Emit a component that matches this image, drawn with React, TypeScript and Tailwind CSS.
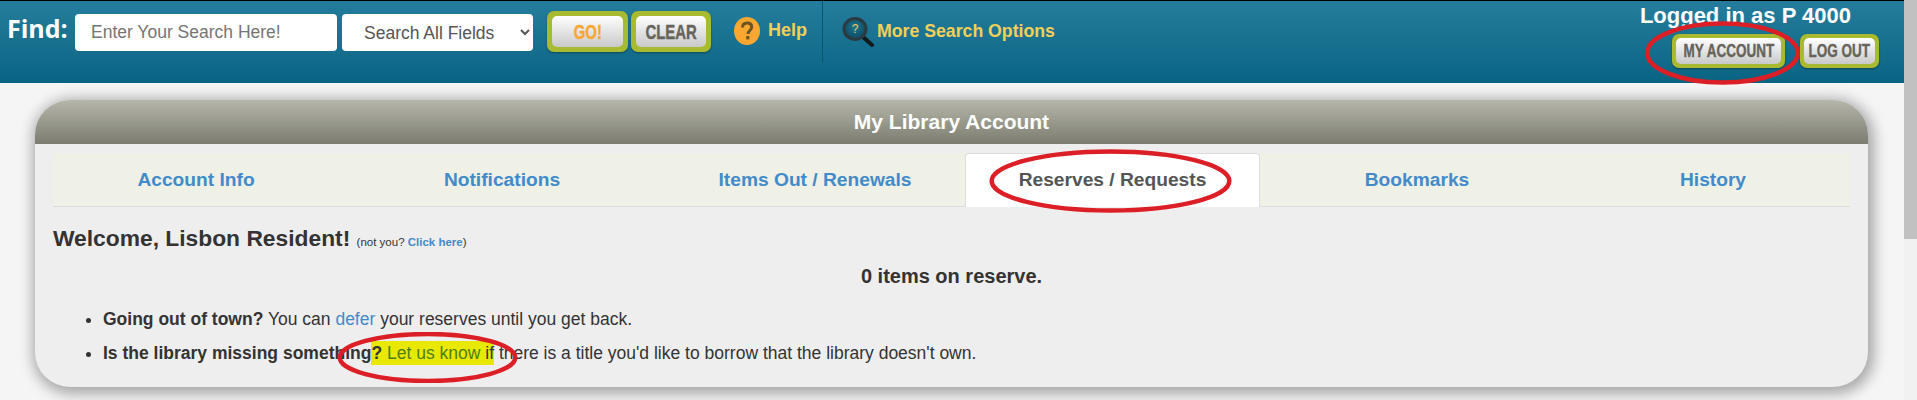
const SANS = "font-['Liberation_Sans',Arial,sans-serif]";

const tabs = [
  { label: "Account Info" },
  { label: "Notifications" },
  { label: "Items Out / Renewals" },
  { label: "Reserves / Requests", active: true },
  { label: "Bookmarks" },
  { label: "History" },
];

function GreenButton({ label, size = "lg", color = "text-[#66645a]" }: { label: string; size?: "lg" | "sm"; color?: string }) {
  const outer = size === "lg" ? "h-[41px] p-[5px]" : "h-[34px] p-[4px]";
  return (
    <div className={`rounded-[7px] bg-[#a8ba30] shadow-[0_1px_2px_rgba(0,0,0,0.35)] ${outer}`}>
      <div className="flex h-full items-center justify-center rounded-[5px] bg-gradient-to-b from-white to-[#c9c9c9]">
        <span className={`inline-block scale-x-[0.71] font-bold whitespace-nowrap [-webkit-text-stroke:0.4px_currentColor] ${color} ${size === "lg" ? "text-[21px]" : "text-[19px]"}`}>
          {label}
        </span>
      </div>
    </div>
  );
}

function HelpIcon() {
  return (
    <svg width="26" height="28" viewBox="0 0 26 28" className="shrink-0">
      <ellipse cx="13" cy="14" rx="13" ry="14" fill="#f9a730" />
      <path d="M8.500 10.500c0-3 2-4.500 4.700-4.500 2.800 0 4.500 1.600 4.500 4 0 3.500-3.700 3.500-3.700 7" fill="none" stroke="#6b5522" strokeWidth="3" />
      <rect x="12.200" y="19" width="3.200" height="3.400" fill="#6b5522" />
    </svg>
  );
}

function SearchIcon() {
  return (
    <svg width="34" height="30" viewBox="0 0 34 30" className="shrink-0">
      <defs>
        <radialGradient id="lens" cx="50%" cy="40%" r="60%">
          <stop offset="0%" stopColor="#1d7391" />
          <stop offset="100%" stopColor="#0c4a60" />
        </radialGradient>
      </defs>
      <line x1="21" y1="19" x2="31" y2="28" stroke="#14191c" strokeWidth="4" strokeLinecap="round" />
      <ellipse cx="14" cy="12" rx="11" ry="10.500" fill="url(#lens)" stroke="#2c3a42" strokeWidth="3" />
      <text x="14" y="16" textAnchor="middle" fontSize="12" fontFamily="Liberation Sans" fill="#e6cf5a">?</text>
    </svg>
  );
}

function Ring({ className }: { className: string }) {
  return (
    <svg className={`pointer-events-none absolute ${className}`} viewBox="0 0 200 100" preserveAspectRatio="none">
      <ellipse cx="100" cy="50" rx="97" ry="46" fill="none" stroke="#dc1f26" strokeWidth="4.500" vectorEffect="non-scaling-stroke" />
    </svg>
  );
}

export default function App() {
  return (
    <div className={`relative flex h-[400px] overflow-hidden bg-[#f5f5f5] ${SANS}`}>
      <div className="min-w-0 flex-1">
        <header className="flex h-[83px] border-t border-black bg-gradient-to-b from-[#247d9c] to-[#086483]">
          <span className="mt-[13px] ml-[7px] w-[62px] font-['Open_Sans',sans-serif] text-[25px] leading-[28px] font-bold text-white">Find:</span>
          <input
            placeholder="Enter Your Search Here!"
            className="mt-[13px] ml-[6px] h-[37px] w-[262px] rounded-[4px] bg-white px-4 text-[17.500px] text-[#555] outline-none placeholder:text-[#757575]"
          />
          <select className="mt-[13px] ml-[5px] h-[37px] w-[191px] rounded-[4px] bg-white pl-[18px] text-[17.500px] text-[#555] outline-none">
            <option>Search All Fields</option>
          </select>
          <div className="mt-[10px] ml-[14px] w-[81px]">
            <GreenButton label="GO!" color="text-[#f9a730]" />
          </div>
          <div className="mt-[10px] ml-[3px] w-[80px]">
            <GreenButton label="CLEAR" />
          </div>
          <div className="mt-[16px] ml-[23px] flex h-[28px] items-center gap-2">
            <HelpIcon />
            <span className="pb-[2px] text-[18px] font-bold text-[#f2cf55]">Help</span>
          </div>
          <div className="ml-[15px] h-[61px] w-px bg-[#0b5470]" />
          <div className="mt-[16px] ml-[18px] flex h-[30px] items-center gap-[2px]">
            <SearchIcon />
            <span className="pb-[2px] text-[17.700px] font-bold text-[#f2cf55]">More Search Options</span>
          </div>
          <div className="ml-auto flex flex-col items-end pr-[25px]">
            <span className="mt-px mr-[28px] text-[22px] leading-[27px] font-bold text-white">Logged in as P 4000</span>
            <div className="mt-[5px] flex gap-[15px]">
              <div className="w-[113px]">
                <GreenButton label="MY ACCOUNT" size="sm" />
              </div>
              <div className="w-[79px]">
                <GreenButton label="LOG OUT" size="sm" />
              </div>
            </div>
          </div>
        </header>

        <main className="px-[35px] pt-[17px]">
          <section className="h-[287px] w-[1833px] overflow-hidden rounded-[35px] bg-[#eeeeee] shadow-[2px_3px_14px_4px_rgba(0,0,0,0.32)]">
            <h2 className="flex h-[44px] items-center justify-center bg-gradient-to-b from-[#b6b7aa] to-[#7c7c71] text-[21px] font-bold text-white">
              My Library Account
            </h2>
            <div className="px-[18px] pt-[9px]">
              <nav className="grid h-[54px] grid-cols-[286px_326px_300px_295px_314px_278px] border-b border-[#dddddd] bg-[#eff0e6]">
                {tabs.map((tab) => (
                  <a
                    key={tab.label}
                    className={
                      tab.active
                        ? "flex h-[54px] items-center justify-center rounded-t-[4px] border border-b-0 border-[#dddddd] bg-white text-[19.200px] font-bold text-[#555]"
                        : "flex items-center justify-center text-[19.200px] font-bold text-[#428bca]"
                    }
                  >
                    {tab.label}
                  </a>
                ))}
              </nav>
              <p className="mt-[17px] text-[22.800px] leading-[28px] font-bold text-[#333]">
                Welcome, Lisbon Resident!{" "}
                <span className="text-[11.500px] font-normal">
                  (not you? <a className="font-bold text-[#428bca]">Click here</a>)
                </span>
              </p>
              <p className="mt-[8px] text-center text-[20px] leading-[24px] font-bold text-[#333]">0 items on reserve.</p>
              <ul className="mt-[14px] ml-[32px] list-disc pl-[18px] text-[17.500px] leading-[34px] text-[#333]">
                <li>
                  <b>Going out of town?</b> You can <a className="text-[#428bca]">defer</a> your reserves until you get back.
                </li>
                <li>
                  <b>Is the library missing something</b>
                  <span className="bg-[#e8e800] py-[2px]">
                    <b>?</b> <a className="text-[#4e7f12]">Let us know</a> if
                  </span>{" "}
                  there is a title you'd like to borrow that the library doesn't own.
                </li>
              </ul>
            </div>
          </section>
        </main>
      </div>

      <aside className="w-[13px] shrink-0 bg-[#f1f1f1]">
        <div className="h-[239px] bg-[#c1c1c1]" />
      </aside>

      <Ring className="top-[21px] left-[1645px] h-[64px] w-[155px]" />
      <Ring className="top-[149px] left-[988px] h-[64px] w-[245px]" />
      <Ring className="top-[332px] left-[337px] h-[51px] w-[181px]" />
    </div>
  );
}
